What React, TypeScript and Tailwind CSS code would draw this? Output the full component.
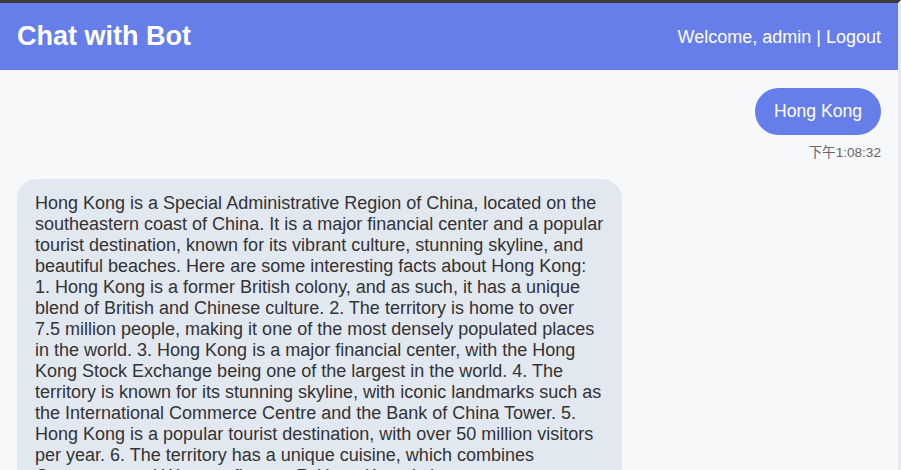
import React from "react";

interface Message {
  role: "user" | "bot";
  text: string;
  time?: string;
}

const messages: Message[] = [
  { role: "user", text: "Hong Kong", time: "下午1:08:32" },
  {
    role: "bot",
    text:
      "Hong Kong is a Special Administrative Region of China, located on the southeastern coast of China. It is a major financial center and a popular tourist destination, known for its vibrant culture, stunning skyline, and beautiful beaches. Here are some interesting facts about Hong Kong: 1. Hong Kong is a former British colony, and as such, it has a unique blend of British and Chinese culture. 2. The territory is home to over 7.5 million people, making it one of the most densely populated places in the world. 3. Hong Kong is a major financial center, with the Hong Kong Stock Exchange being one of the largest in the world. 4. The territory is known for its stunning skyline, with iconic landmarks such as the International Commerce Centre and the Bank of China Tower. 5. Hong Kong is a popular tourist destination, with over 50 million visitors per year. 6. The territory has a unique cuisine, which combines Cantonese and Western flavors. 7. Hong Kong is home to many beautiful beaches and hiking trails, offering a break from the busy city life.",
  },
];

export default function App() {
  return (
    <div className="flex h-[470px] flex-col overflow-hidden border-t-[3px] border-r-[3px] border-t-[#3b3b3f] border-r-[#e8e9ee] bg-[#f7f8fa] font-['Liberation_Sans','Noto_Sans_CJK_SC',sans-serif]">
      {/* Header */}
      <header className="flex h-[67px] shrink-0 items-center justify-between bg-[#667eea] px-[17px] text-white">
        <h1 className="text-[27px] font-bold leading-none">Chat with Bot</h1>
        <div className="text-[18px] leading-none">
          Welcome, admin | <span>Logout</span>
        </div>
      </header>

      {/* Messages */}
      <main className="flex flex-1 flex-col gap-[19px] px-[17px] pt-[18px]">
        {messages.map((m, i) =>
          m.role === "user" ? (
            <div key={i} className="flex flex-col items-end">
              <div className="rounded-full bg-[#667eea] px-[19px] py-[13px] text-[17.6px] leading-[21px] text-white">
                {m.text}
              </div>
              <span className="mt-[11px] text-[13.6px] leading-none text-[#666]">
                {m.time}
              </span>
            </div>
          ) : (
            <div key={i} className="flex">
              <div className="max-w-[70%] rounded-[20px] bg-[#e2e8f0] px-[18px] pt-[14px] pb-[14px] text-[18px] leading-[21px] text-[#333]">
                {m.text}
              </div>
            </div>
          )
        )}
      </main>
    </div>
  );
}
